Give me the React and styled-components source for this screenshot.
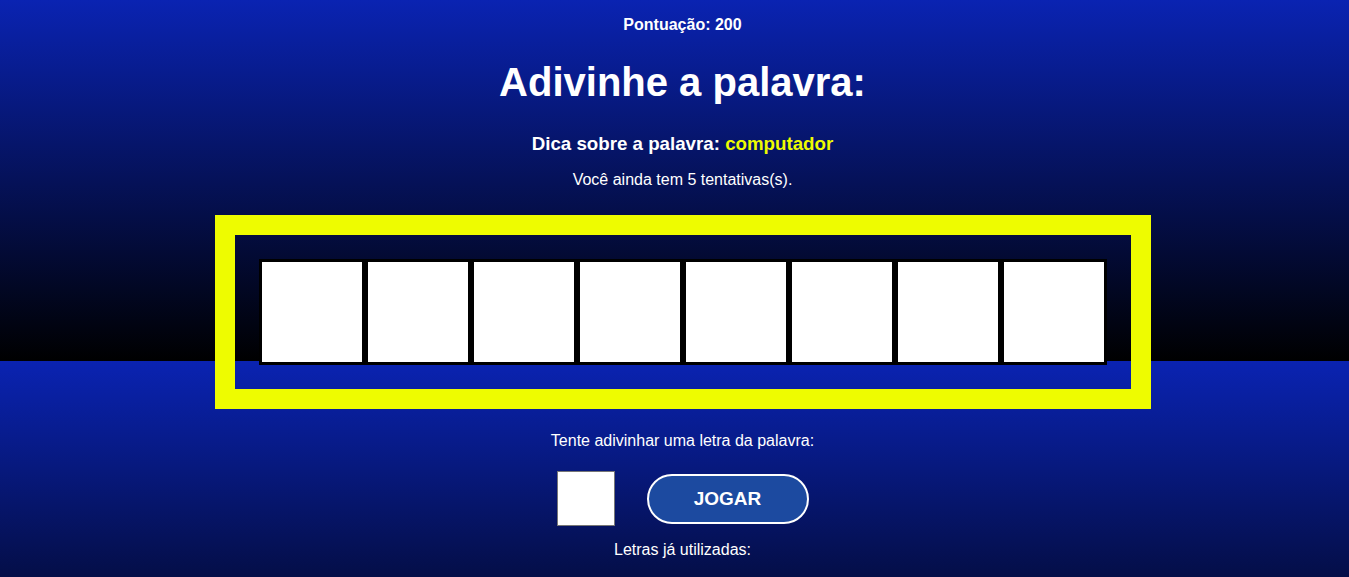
import styled, { createGlobalStyle } from "styled-components"

const GlobalStyle = createGlobalStyle`
  html, body {
    margin: 0;
    padding: 0;
  }
  body {
    font-family: "Liberation Sans", Arial, sans-serif;
    color: white;
    background: linear-gradient(#0a23b2, #000000);
    background-size: 100% 361px;
    background-repeat: repeat-y;
    min-height: 577px;
  }
`
const Page = styled.div`
  display: flex;
  flex-direction: column;
  align-items: center;
  padding-left: 16px;
  box-sizing: border-box;
  width: 1349px;
  min-height: 577px;
`
const Score = styled.p`
  margin: 16px 0 0;
  font-size: 16px;
  font-weight: bold;
`
const Title = styled.h1`
  margin: 26px 0 0;
  font-size: 40px;
  font-weight: bold;
`
const Hint = styled.h3`
  margin: 28px 0 0;
  font-size: 18.72px;
  font-weight: bold;
`
const HintWord = styled.span`
  color: #eefc00;
`
const Attempts = styled.p`
  margin: 16px 0 0;
  font-size: 16px;
`
const Frame = styled.div`
  margin-top: 26px;
  border: 20px solid #eefc00;
  padding: 24px;
  display: flex;
`
const LetterBox = styled.div`
  width: 100px;
  height: 100px;
  background: white;
  border: 3px solid black;
`
const Label = styled.p`
  margin: ${p => p.$top}px 0 0;
  font-size: 16px;
`
const GuessRow = styled.div`
  margin-top: 21px;
  display: flex;
  align-items: center;
  gap: 32px;
`
const LetterInput = styled.input`
  width: 58px;
  height: 55px;
  box-sizing: border-box;
  border: 1px solid #767676;
  background: white;
  font-size: 24px;
  text-align: center;
  outline: none;
`
const PlayButton = styled.button`
  width: 162px;
  height: 50px;
  border: 2px solid white;
  border-radius: 25px;
  background: #1c4aa0;
  color: white;
  font-family: "Liberation Sans", Arial, sans-serif;
  font-size: 19px;
  font-weight: bold;
  cursor: pointer;
`

export default function App() {
  const letters = Array.from({ length: 8 })
  return (
    <>
      <GlobalStyle />
      <Page>
        <Score>Pontuação: 200</Score>
        <Title>Adivinhe a palavra:</Title>
        <Hint>Dica sobre a palavra: <HintWord>computador</HintWord></Hint>
        <Attempts>Você ainda tem 5 tentativas(s).</Attempts>
        <Frame>
          {letters.map((_, i) => <LetterBox key={i} />)}
        </Frame>
        <Label $top={23}>Tente adivinhar uma letra da palavra:</Label>
        <GuessRow>
          <LetterInput maxLength={1} />
          <PlayButton>JOGAR</PlayButton>
        </GuessRow>
        <Label $top={15}>Letras já utilizadas:</Label>
      </Page>
    </>
  )
}
